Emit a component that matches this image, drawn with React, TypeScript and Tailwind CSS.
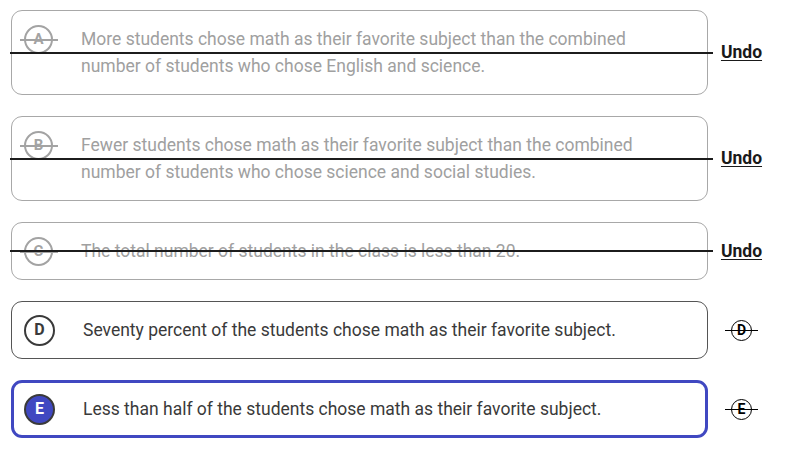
import React from 'react'

type Choice = {
  letter: string
  text: string
  crossed: boolean
  selected?: boolean
}

const choices: Choice[] = [
  {
    letter: 'A',
    text: 'More students chose math as their favorite subject than the combined number of students who chose English and science.',
    crossed: true,
  },
  {
    letter: 'B',
    text: 'Fewer students chose math as their favorite subject than the combined number of students who chose science and social studies.',
    crossed: true,
  },
  {
    letter: 'C',
    text: 'The total number of students in the class is less than 20.',
    crossed: true,
  },
  {
    letter: 'D',
    text: 'Seventy percent of the students chose math as their favorite subject.',
    crossed: false,
  },
  {
    letter: 'E',
    text: 'Less than half of the students chose math as their favorite subject.',
    crossed: false,
    selected: true,
  },
]

function LetterBadge({ choice }: { choice: Choice }) {
  if (choice.crossed) {
    return (
      <div className="relative -my-[1px] shrink-0">
        <div className="flex h-[29px] w-[29px] items-center justify-center rounded-full border-2 border-[#a3a3a3] text-[15px] font-bold text-[#a3a3a3]">
          {choice.letter}
        </div>
        {/* little strike over the letter */}
        <div className="absolute left-[-4px] right-[-5px] top-[14px] h-[2px] bg-[#a3a3a3]" />
      </div>
    )
  }
  if (choice.selected) {
    return (
      <div className="-my-[2px] flex h-[31px] w-[31px] shrink-0 items-center justify-center rounded-full border-2 border-[#3a3a3a] bg-[#4048c1] text-[16px] font-bold text-white">
        {choice.letter}
      </div>
    )
  }
  return (
    <div className="-my-[2px] flex h-[31px] w-[31px] shrink-0 items-center justify-center rounded-full border-2 border-[#3a3a3a] text-[16px] font-bold text-[#3a3a3a]">
      {choice.letter}
    </div>
  )
}

function EliminateIcon({ letter }: { letter: string }) {
  return (
    <div className="relative">
      <div className="flex h-[21px] w-[21px] items-center justify-center rounded-full border-[1.5px] border-black text-[14px] font-bold leading-none text-black">
        {letter}
      </div>
      <div className="absolute left-[-6px] right-[-6px] top-[10px] h-px bg-black" />
    </div>
  )
}

function ChoiceRow({ choice }: { choice: Choice }) {
  const cardBorder = choice.selected
    ? 'border-[3px] border-[#4048c1] py-[12.5px] pl-[10px]'
    : choice.crossed
      ? 'border border-[#a8a8a8] py-[14.5px] pl-[12px]'
      : 'border border-[#555555] py-[14.5px] pl-[12px]'

  return (
    <div className="relative flex items-center">
      <div className={`flex w-[697px] items-start gap-[28px] rounded-[11px] pr-[40px] ${cardBorder}`}>
        <LetterBadge choice={choice} />
        <p
          className={`text-[17.5px] leading-[27px] ${
            choice.crossed ? 'text-[#a0a0a0]' : 'text-[#3a3a3a]'
          }`}
        >
          {choice.text}
        </p>
      </div>
      <div className="flex w-[67px] items-center justify-center">
        {choice.crossed ? (
          <button className="text-[17.5px] font-bold text-[#1a1a1a] underline underline-offset-2">Undo</button>
        ) : (
          <EliminateIcon letter={choice.letter} />
        )}
      </div>
      {choice.crossed && (
        <div className="absolute left-[-1px] top-1/2 h-[2px] w-[703px] -translate-y-1/2 bg-[#1c1c1c]" />
      )}
    </div>
  )
}

export default function App() {
  return (
    <div className="min-h-screen bg-white pl-[11px] pt-[10px] font-['Roboto','Liberation_Sans',sans-serif]">
      <div className="flex flex-col gap-[21px]">
        {choices.map((c) => (
          <ChoiceRow key={c.letter} choice={c} />
        ))}
      </div>
    </div>
  )
}
